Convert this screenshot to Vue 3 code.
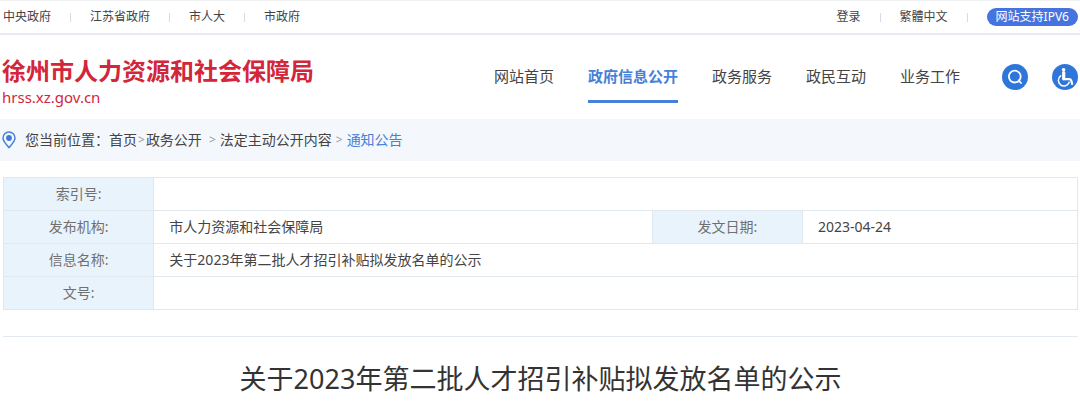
<script setup>
const regionLinks = ['中央政府', '江苏省政府', '市人大', '市政府']
const userLinks = ['登录', '繁體中文']
const navItems = [
  { label: '网站首页' },
  { label: '政府信息公开', active: true },
  { label: '政务服务' },
  { label: '政民互动' },
  { label: '业务工作' },
]
</script>

<template>
  <div class="page">
    <div class="topbar">
      <ul class="links">
        <li v-for="link in regionLinks" :key="link"><a href="#">{{ link }}</a></li>
      </ul>
      <div class="user">
        <ul class="links">
          <li v-for="link in userLinks" :key="link"><a href="#">{{ link }}</a></li>
          <li><a class="pill" href="#">网站支持IPV6</a></li>
        </ul>
      </div>
    </div>

    <header class="header">
      <a class="brand" href="#">
        <strong class="brand-name">徐州市人力资源和社会保障局</strong>
        <span class="brand-host">hrss.xz.gov.cn</span>
      </a>
      <div class="menu">
        <nav class="nav">
          <a v-for="item in navItems" :key="item.label" href="#" :class="{ active: item.active }">{{ item.label }}</a>
        </nav>
        <div class="tools">
          <button type="button" class="round" aria-label="搜索">
            <svg viewBox="0 0 26 26" fill="none" stroke="#fff" stroke-width="1.8" stroke-linecap="round">
              <circle cx="12.8" cy="12.6" r="5.9" />
              <path d="M16.6 16.4l2.4 2.6" />
            </svg>
          </button>
          <button type="button" class="round" aria-label="无障碍">
            <svg viewBox="0 0 26 26" fill="none" stroke="#fff" stroke-linecap="round" stroke-linejoin="round">
              <circle cx="11.6" cy="5.8" r="1.8" fill="#fff" stroke="none" />
              <path d="M11.7 8.6v6.2" stroke-width="3.2" />
              <path d="M12 15.2h5.4q1.6 0 2 1.8l.7 3" stroke-width="2.2" />
              <path d="M8.6 11.8a5.6 5.6 0 1 0 8.6 6.4" stroke-width="1.5" />
            </svg>
          </button>
        </div>
      </div>
    </header>

    <nav class="crumbs" aria-label="您当前位置">
      <svg class="pin" viewBox="0 0 14 18" fill="none">
        <path d="M7 16.6C4.6 13.4 1 10.4 1 6.9a6 6 0 0 1 12 0c0 3.5-3.6 6.5-6 9.7z" stroke="#4a82d8" stroke-width="1.5" />
        <circle cx="7" cy="7" r="2.9" fill="#3f7bd6" />
      </svg>
      <span class="here">您当前位置：</span>
      <a href="#">首页</a><span class="sep tight">&gt;</span>
      <a href="#">政务公开</a><span class="sep wide">&gt;</span>
      <a href="#">法定主动公开内容</a><span class="sep even">&gt;</span>
      <a class="current" href="#">通知公告</a>
    </nav>

    <main class="main">
      <table class="info">
        <colgroup>
          <col class="c-label"><col class="c-org"><col class="c-label"><col>
        </colgroup>
        <tbody>
          <tr><th scope="row">索引号:</th><td colspan="3"></td></tr>
          <tr>
            <th scope="row">发布机构:</th><td>市人力资源和社会保障局</td>
            <th scope="row">发文日期:</th><td>2023-04-24</td>
          </tr>
          <tr><th scope="row">信息名称:</th><td colspan="3">关于2023年第二批人才招引补贴拟发放名单的公示</td></tr>
          <tr><th scope="row">文号:</th><td colspan="3"></td></tr>
        </tbody>
      </table>
      <h1 class="title">关于2023年第二批人才招引补贴拟发放名单的公示</h1>
    </main>
  </div>
</template>

<style>
body {
  margin: 0;
  background: #fff;
}
</style>

<style scoped>
.page {
  font-family: "Noto Sans", "Noto Sans CJK SC", sans-serif;
  font-size: 14px;
  color: #444;
}
a {
  color: inherit;
  text-decoration: none;
}
.topbar {
  display: flex;
  justify-content: space-between;
  align-items: center;
  height: 32px;
  padding: 0 2px 0 3px;
  border-top: 1px solid #eeeff1;
  border-bottom: 2px solid #e6ebf3;
  font-size: 12px;
  line-height: 18px;
}
.links {
  display: flex;
  align-items: center;
  margin: 0;
  padding: 0;
  list-style: none;
}
.links li {
  display: flex;
  align-items: center;
  white-space: nowrap;
}
.links li + li::before {
  content: "";
  width: 1px;
  height: 9px;
  margin: 0 19px;
  background: #d3dce8;
}
.pill {
  padding: 0 9px;
  border-radius: 9px;
  background: #4573df;
  color: #fff;
}
.header {
  display: flex;
  justify-content: space-between;
  align-items: flex-start;
  padding: 20px 2px 12px;
}
.brand {
  display: flex;
  flex-direction: column;
  color: #d3263a;
  white-space: nowrap;
}
.brand-name {
  font-size: 24px;
  line-height: 32px;
}
.brand-host {
  font-size: 15px;
  line-height: 20px;
}
.menu {
  display: flex;
  gap: 42px;
}
.nav {
  display: flex;
  gap: 34px;
  font-size: 15px;
  line-height: 42px;
  white-space: nowrap;
}
.nav a {
  padding-bottom: 3px;
  border-bottom: 3px solid transparent;
}
.nav .active {
  border-color: #4680d8;
  color: #4680d8;
  font-weight: 700;
}
.tools {
  display: flex;
  align-items: center;
  gap: 24px;
  height: 44px;
}
.round {
  width: 26px;
  height: 26px;
  padding: 0;
  border: 0;
  border-radius: 50%;
  background: #2f76db;
}
.round svg {
  display: block;
  width: 100%;
}
.crumbs {
  display: flex;
  align-items: center;
  padding: 10px 2px;
  background: #f4f8fd;
  line-height: 22px;
  white-space: nowrap;
}
.pin {
  width: 14px;
  height: 18px;
  margin-right: 9px;
}
.sep {
  color: #999;
  font-size: 12px;
}
.tight {
  margin: 0 1px;
}
.wide {
  margin: 0 4px 0 7px;
}
.even {
  margin: 0 4px;
}
.current {
  color: #4680d8;
}
.main {
  padding: 16px 2px 0 3px;
}
.info {
  width: 100%;
  table-layout: fixed;
  border-collapse: collapse;
  line-height: 20px;
}
.c-label {
  width: 14%;
}
.c-org {
  width: 46.4%;
}
.info th,
.info td {
  height: 20px;
  padding: 6px 15px;
  border: 1px solid #dfe7ef;
  text-align: left;
}
.info th {
  background: #e9f3fc;
  color: #707070;
  font-weight: 400;
  text-align: center;
}
.title {
  margin: 26px 0 0;
  padding-top: 22px;
  border-top: 1px solid #e3e9f0;
  color: #333;
  font-size: 27px;
  font-weight: 400;
  line-height: 40px;
  text-align: center;
}
</style>
